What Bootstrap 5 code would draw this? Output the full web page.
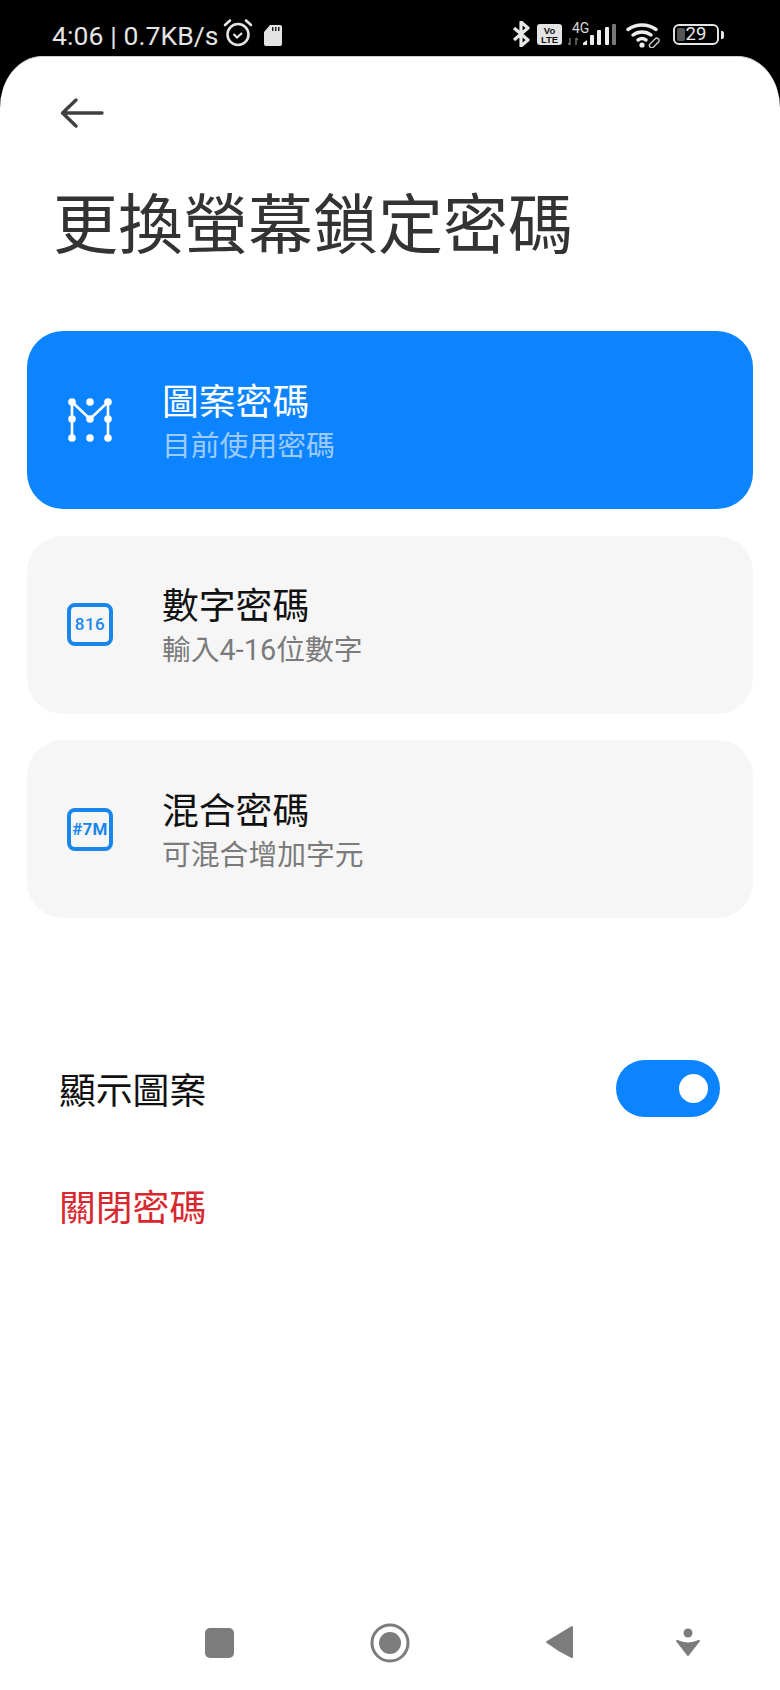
<!DOCTYPE html>
<html lang="zh-Hant">
<head>
<meta charset="utf-8">
<title>更換螢幕鎖定密碼</title>
<link href="https://cdn.jsdelivr.net/npm/bootstrap@5.3.0/dist/css/bootstrap.min.css" rel="stylesheet">
<style>
html,body{margin:0;background:#000;}
body{width:780px;height:1690px;overflow:hidden;font-family:"Roboto","Noto Sans CJK TC",sans-serif;}
.cjk{font-family:"Noto Sans CJK TC",sans-serif;}
.rob{font-family:Roboto,sans-serif;}
.sbar{height:56px;padding-left:52px;color:#e8e8e8;}
.sbar-left{width:460px;}
.sbar-time{font-size:26.5px;line-height:26px;margin-top:23px;letter-spacing:.1px;color:#e4e4e4;}
.i-alarm{margin:18px 0 0 4px;}
.i-sd{margin:24px 0 0 10px;}
.i-bt{margin-top:21px;}
.i-lte{margin:24px 0 0 7px;}
.i-sig{margin:20px 0 0 6px;}
.i-wifi{margin:22px 0 0 10px;}
.battbox{margin:24px 0 0 11px;}
.batt{width:46px;height:21px;border:2px solid #e4e4e4;border-radius:6px;font-size:18.500px;line-height:17px;text-align:center;color:#e8e8e8;}
.batt-fill{inset:2px auto 2px 2px;width:8px;background:#555;border-radius:2px;}
.batt-tip{width:3px;height:8px;background:#e4e4e4;border-radius:0 2px 2px 0;margin-left:2px;}
.sheet{height:1634px;background:#fff;border-radius:42px 42px 0 0 / 52px 52px 0 0;border-top:1px solid #cfcfcf;}
.backrow{padding:40px 0 0 60px;height:83px;}
.pagetitle{font-size:65px;line-height:90px;font-weight:400;color:#333;margin:35px 0 0 53px;font-family:"Noto Sans CJK TC",sans-serif;}
.modes{margin:66px 27px 0;gap:26.500px;}
.mode{height:178px;border-radius:36px;background:#f6f6f6;padding-left:40px;}
.mode-on{background:#0d84ff;}
.mode-ico{width:44px;height:44px;margin:0 50px 0 1px;flex:none;}
.pin{width:46px;height:43px;border:4px solid #1a86eb;border-radius:8px;color:#1a86eb;font-size:17px;font-weight:500;line-height:1;letter-spacing:.5px;margin-right:49px;flex:none;}
.pin-tight{font-size:17px;font-weight:700;letter-spacing:.2px;}
.mode-name{font-size:36.800px;line-height:48px;color:#111;}
.mode-sub{font-size:28.800px;line-height:42px;color:#7b7b7b;}
.mode-on .mode-name{color:#fff;}
.mode-on .mode-sub{color:#9ccbff;}
.optrow{margin:140px 60px 0 59px;height:60px;}
.optlabel{font-size:36.800px;line-height:50px;color:#111;}
.toggle{width:104px;height:57px;border-radius:29px;background:#0d84ff;padding-right:12px;}
.knob{width:29px;height:29px;border-radius:50%;background:#fff;}
.danger-row{margin:57px 0 0 59px;font-size:36.800px;line-height:60px;color:#d8282f;}
.softkeys{height:78px;}
</style>
</head>
<body>
<div class="sbar d-flex align-items-start">
  <div class="sbar-left d-flex align-items-start">
    <span class="sbar-time">4:06 | 0.7KB/s</span>
    <svg class="i-alarm" width="30" height="30" viewBox="0 0 30 30"><g fill="none" stroke="#e4e4e4" stroke-width="2.600"><circle cx="15" cy="16.500" r="10.500"/><path d="M10.500 16l3.500 3.500 5-4.500" stroke-width="2.200"/><path d="M2 7l5-4.500M28 7l-5-4.500" stroke-linecap="round"/></g></svg>
    <svg class="i-sd" width="20" height="22" viewBox="0 0 20 22"><path d="M7 1h10a2 2 0 0 1 2 2v17a2 2 0 0 1-2 2H3a2 2 0 0 1-2-2V8z" fill="#e4e4e4"/><path d="M9 3h1.500v4H9zM12 3h1.500v4H12zM15 3h1.500v4H15z" fill="#222"/></svg>
  </div>
  <svg class="i-bt" width="18" height="26" viewBox="0 0 18 26"><path d="M2 7l14 12-7 6V1l7 6L2 19" fill="none" stroke="#e8e8e8" stroke-width="3.200" stroke-linejoin="round"/></svg>
  <svg class="i-lte" width="25" height="21" viewBox="0 0 25 21"><rect width="25" height="21" rx="3" fill="#e4e4e4"/><text x="12.500" y="9.500" font-family="Liberation Sans,sans-serif" font-size="9.500" font-weight="700" text-anchor="middle" fill="#111">Vo</text><text x="12.500" y="19" font-family="Liberation Sans,sans-serif" font-size="9.500" font-weight="700" text-anchor="middle" fill="#111">LTE</text></svg>
  <svg class="i-sig" width="48" height="27" viewBox="0 0 48 27"><text x="4" y="13" class="rob" font-size="14" fill="#d8d8d8">4G</text><path d="M2 18v7M0 23l2 2M8 25v-7M10 20l-2-2" fill="none" stroke="#666" stroke-width="1.600"/><path d="M15 25v-2l4-3v5z" fill="#eee"/><rect x="22" y="15" width="4" height="10" rx="1" fill="#eee"/><rect x="29" y="10" width="4" height="15" rx="1" fill="#eee"/><rect x="37" y="7" width="4" height="18" rx="1" fill="#eee"/><rect x="44" y="4" width="4" height="21" rx="1" fill="#777"/></svg>
  <svg class="i-wifi" width="36" height="26" viewBox="0 0 36 26"><g fill="none" stroke="#eee" stroke-width="3.400" stroke-linecap="round"><path d="M2 7.500a24 24 0 0 1 28 0"/><path d="M7 13a15 15 0 0 1 18 0"/><path d="M12 18a7 7 0 0 1 8 0"/></g><circle cx="16" cy="23" r="2.600" fill="#eee"/><path d="M24 22l5-5a2.200 2.200 0 0 1 3.500 3l-5 5a2.200 2.200 0 0 1-3.500-3z" fill="none" stroke="#ccc" stroke-width="1.400"/></svg>
  <div class="battbox d-flex align-items-center">
    <div class="batt position-relative"><span class="batt-fill position-absolute"></span><span class="position-relative">29</span></div>
    <span class="batt-tip"></span>
  </div>
</div>
<div class="sheet d-flex flex-column cjk">
  <div class="backrow">
    <svg width="44" height="32" viewBox="0 0 44 32"><path d="M42 16H3M16 3L2.500 16 16 29" fill="none" stroke="#404040" stroke-width="3.400" stroke-linecap="round" stroke-linejoin="round"/></svg>
  </div>
  <h1 class="pagetitle">更換螢幕鎖定密碼</h1>
  <div class="modes d-flex flex-column">
    <div class="mode mode-on d-flex align-items-center">
      <svg class="mode-ico" viewBox="0 0 44 44"><g fill="#fff"><circle cx="4" cy="4" r="3.800"/><circle cx="22" cy="4" r="3.800"/><circle cx="40" cy="4" r="3.800"/><circle cx="4" cy="21" r="3.800"/><circle cx="22" cy="21" r="3.800"/><circle cx="40" cy="21" r="3.800"/><circle cx="4" cy="40" r="3.800"/><circle cx="22" cy="40" r="3.800"/><circle cx="40" cy="40" r="3.800"/></g><path d="M4 40V4l18 17L40 4v36" fill="none" stroke="#fff" stroke-width="2.600"/></svg>
      <div><div class="mode-name">圖案密碼</div><div class="mode-sub">目前使用密碼</div></div>
    </div>
    <div class="mode d-flex align-items-center">
      <div class="pin rob d-flex align-items-center justify-content-center">816</div>
      <div><div class="mode-name">數字密碼</div><div class="mode-sub">輸入<span class="rob">4-16</span>位數字</div></div>
    </div>
    <div class="mode d-flex align-items-center">
      <div class="pin pin-tight rob d-flex align-items-center justify-content-center">#7M</div>
      <div><div class="mode-name">混合密碼</div><div class="mode-sub">可混合增加字元</div></div>
    </div>
  </div>
  <div class="optrow d-flex align-items-center justify-content-between">
    <span class="optlabel">顯示圖案</span>
    <div class="toggle d-flex align-items-center justify-content-end"><span class="knob"></span></div>
  </div>
  <div class="danger-row">關閉密碼</div>
  <div class="softkeys mt-auto">
    <svg width="780" height="78" viewBox="0 0 780 78" class="d-block"><rect x="205" y="16" width="29" height="30" rx="5" fill="#7c7c7c"/><circle cx="390" cy="31" r="18" fill="none" stroke="#7c7c7c" stroke-width="3"/><circle cx="390" cy="31" r="11" fill="#7c7c7c"/><path d="M572 15v30l-14-7.500-11-7.500z" fill="#7c7c7c" stroke="#7c7c7c" stroke-width="2" stroke-linejoin="round"/><circle cx="688" cy="21" r="4.500" fill="#7c7c7c"/><path d="M677 29q11 5 22 0l-11 14z" fill="#7c7c7c" stroke="#7c7c7c" stroke-width="2" stroke-linejoin="round"/></svg>
  </div>
</div>
</body>
</html>
